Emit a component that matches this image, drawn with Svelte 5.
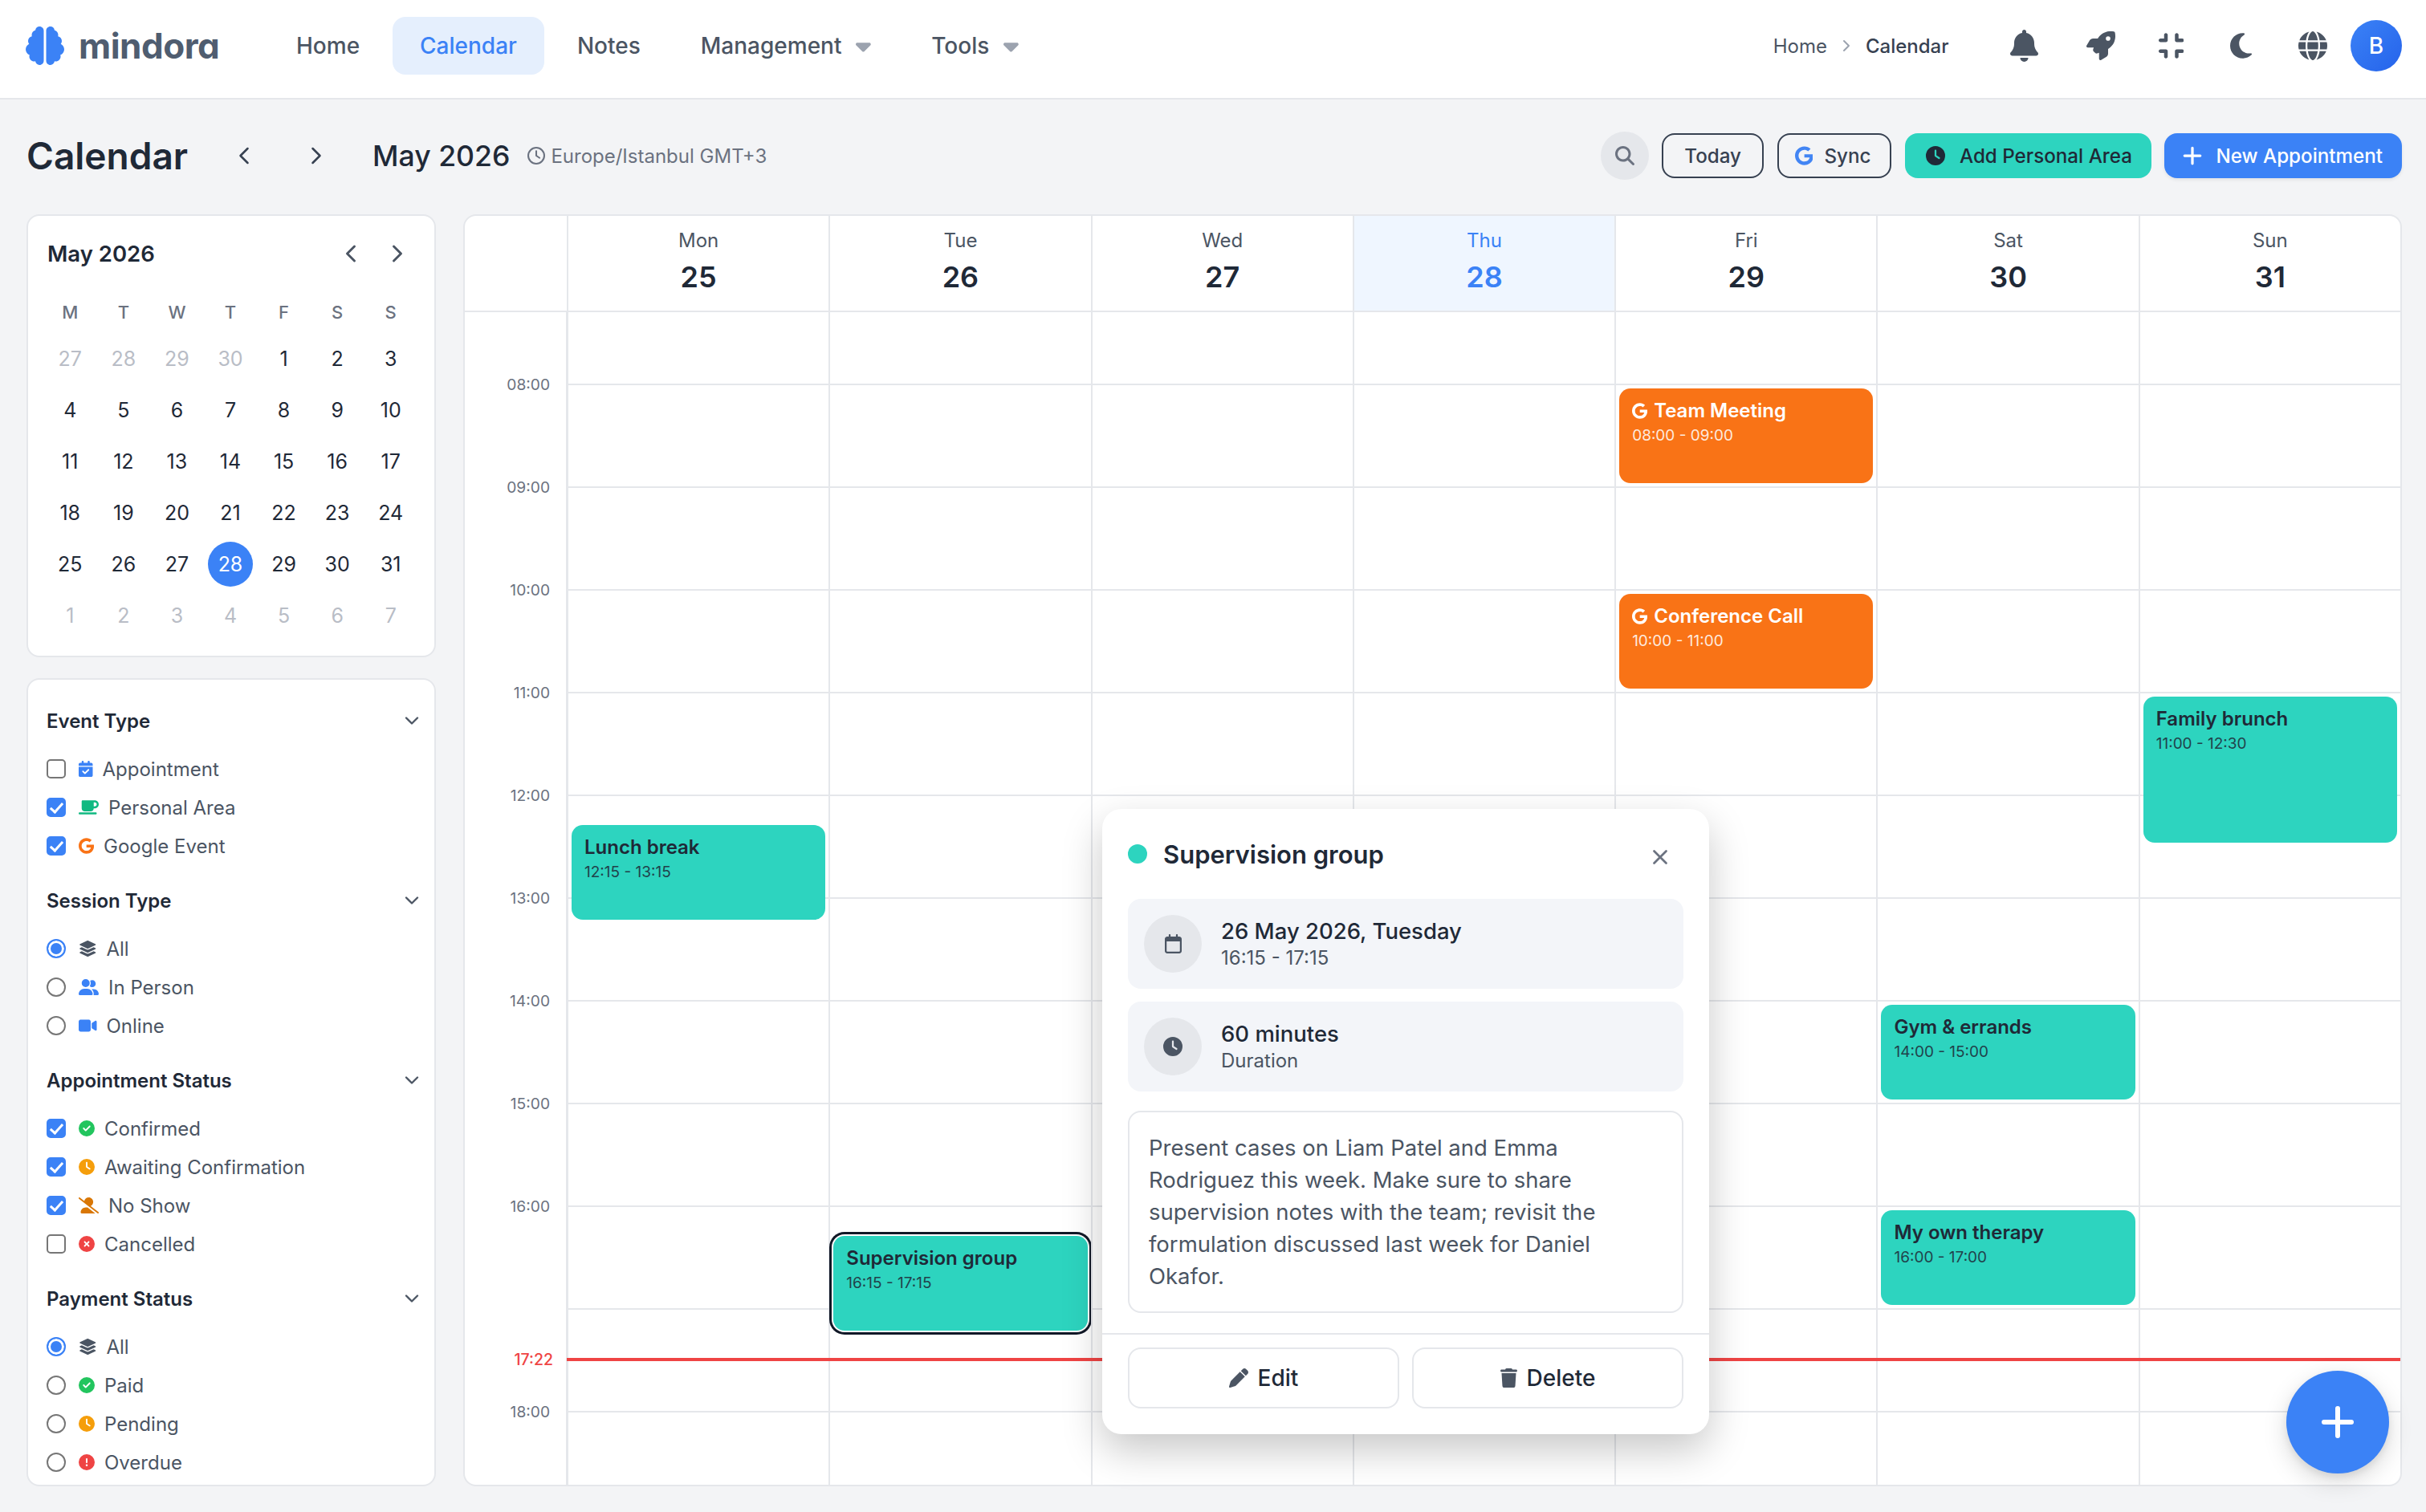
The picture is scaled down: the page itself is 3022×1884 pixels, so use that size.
<script>
  const icons = {
    brain: [512, 'M184 0c30.9 0 56 25.1 56 56V456c0 30.9-25.1 56-56 56c-28.9 0-52.7-21.9-55.7-50.1c-5.2 1.4-10.7 2.1-16.3 2.1c-35.3 0-64-28.7-64-64c0-7.4 1.3-14.6 3.6-21.2C21.4 367.4 0 338.2 0 304c0-31.9 18.7-59.5 45.8-72.3C37.1 220.8 32 207 32 192c0-30.7 21.6-56.3 50.4-62.6C80.8 123.9 80 118 80 112c0-29.9 20.6-55.1 48.3-62.1C131.3 21.9 155.1 0 184 0zM328 0c28.9 0 52.6 21.9 55.7 49.9c27.8 7 48.3 32.1 48.3 62.1c0 6-.8 11.9-2.4 17.4c28.8 6.2 50.4 31.9 50.4 62.6c0 15-5.1 28.8-13.8 39.7C493.3 244.5 512 272.1 512 304c0 34.2-21.4 63.4-51.6 74.8c2.3 6.6 3.6 13.8 3.6 21.2c0 35.3-28.7 64-64 64c-5.6 0-11.1-.7-16.3-2.1c-3 28.2-26.8 50.1-55.7 50.1c-30.9 0-56-25.1-56-56V56c0-30.9 25.1-56 56-56z'],
    bell: [448, 'M224 0c-17.7 0-32 14.3-32 32V51.2C119 66 64 130.6 64 208v18.8c0 47-17.3 92.4-48.5 127.6l-7.4 8.3c-8.4 9.4-10.4 22.9-5.3 34.4S19.4 416 32 416H416c12.6 0 24-7.4 29.2-18.9s3.1-25-5.3-34.4l-7.4-8.3C401.3 319.2 384 273.9 384 226.8V208c0-77.4-55-142-128-156.8V32c0-17.7-14.3-32-32-32zm45.3 493.3c12-12 18.7-28.3 18.7-45.3H224 160c0 17 6.7 33.3 18.7 45.3s28.3 18.7 45.3 18.7s33.3-6.7 45.3-18.7z'],
    rocket: [512, 'M156.6 384.9L125.7 354c-8.5-8.5-11.5-20.8-7.7-32.2c3-8.9 7-20.5 11.8-33.8L24 288c-8.6 0-16.6-4.6-20.9-12.1s-4.2-16.7 .2-24.1l52.5-88.5c13-21.9 36.5-35.3 61.9-35.3l82.3 0c2.4-4 4.8-7.7 7.2-11.3C289.1-4.1 411.1-8.1 483.9 5.3c11.6 2.1 20.6 11.2 22.8 22.8c13.4 72.9 9.3 194.8-111.4 276.7c-3.5 2.4-7.3 4.8-11.3 7.2v82.3c0 25.4-13.4 49-35.3 61.9l-88.5 52.5c-7.4 4.4-16.6 4.5-24.1 .2s-12.1-12.2-12.1-20.9V380.8c-14.1 4.9-26.4 8.9-35.7 11.9c-11.2 3.6-23.4 .5-31.8-7.8zM384 168a40 40 0 1 0 0-80 40 40 0 1 0 0 80z'],
    compress: [448, 'M160 64c0-17.7-14.3-32-32-32s-32 14.3-32 32v64H32c-17.7 0-32 14.3-32 32s14.3 32 32 32h96c17.7 0 32-14.3 32-32V64zM32 320c-17.7 0-32 14.3-32 32s14.3 32 32 32H96v64c0 17.7 14.3 32 32 32s32-14.3 32-32V352c0-17.7-14.3-32-32-32H32zM352 64c0-17.7-14.3-32-32-32s-32 14.3-32 32v96c0 17.7 14.3 32 32 32h96c17.7 0 32-14.3 32-32s-14.3-32-32-32H352V64zM320 320c-17.7 0-32 14.3-32 32v96c0 17.7 14.3 32 32 32s32-14.3 32-32V384h64c17.7 0 32-14.3 32-32s-14.3-32-32-32H320z'],
    moon: [384, 'M223.5 32C100 32 0 132.3 0 256S100 480 223.5 480c60.6 0 115.5-24.2 155.8-63.4c5-4.9 6.3-12.5 3.1-18.7s-10.1-9.7-17-8.5c-9.8 1.7-19.8 2.6-30.1 2.6c-96.9 0-175.5-78.8-175.5-176c0-65.8 36-123.1 89.3-153.3c6.1-3.5 9.2-10.5 7.7-17.3s-7.3-11.9-14.3-12.5c-6.3-.5-12.6-.8-19-.8z'],
    globe: [512, 'M352 256c0 22.2-1.2 43.6-3.3 64H163.3c-2.2-20.4-3.3-41.8-3.3-64s1.2-43.6 3.3-64H348.7c2.2 20.4 3.3 41.8 3.3 64zm28.8-64H503.9c5.3 20.5 8.1 41.9 8.1 64s-2.8 43.5-8.1 64H380.8c2.1-20.6 3.2-42 3.2-64s-1.1-43.4-3.2-64zm112.6-32H376.7c-10-63.9-29.8-117.4-55.3-151.6c78.3 20.7 142 77.5 171.9 151.6zm-149.1 0H167.7c6.1-36.4 15.5-68.6 27-94.7c10.5-23.6 22.2-40.7 33.5-51.5C239.4 3.2 248.7 0 256 0s16.6 3.2 27.8 13.8c11.3 10.8 23 27.9 33.5 51.5c11.6 26 20.9 58.2 27 94.7zm-209 0H18.6C48.6 85.9 112.2 29.1 190.6 8.4C165.1 42.6 145.3 96.1 135.3 160zM8.1 192H131.2c-2.1 20.6-3.2 42-3.2 64s1.1 43.4 3.2 64H8.1C2.8 299.5 0 278.1 0 256s2.8-43.5 8.1-64zM194.7 446.6c-11.6-26-20.9-58.2-27-94.6H344.3c-6.1 36.4-15.5 68.6-27 94.6c-10.5 23.6-22.2 40.7-33.5 51.5C272.6 508.8 263.3 512 256 512s-16.6-3.2-27.8-13.8c-11.3-10.8-23-27.9-33.5-51.5zM135.3 352c10 63.9 29.8 117.4 55.3 151.6C112.2 482.9 48.6 426.1 18.6 352H135.3zm358.1 0c-30 74.1-93.6 130.9-171.9 151.6c25.5-34.2 45.2-87.7 55.3-151.6H493.4z'],
    clock: [512, 'M256 0a256 256 0 1 1 0 512A256 256 0 1 1 256 0zM232 120V256c0 8 4 15.5 10.7 20l96 64c11 7.4 25.9 4.4 33.3-6.7s4.4-25.9-6.7-33.3L280 243.2V120c0-13.3-10.7-24-24-24s-24 10.7-24 24z'],
    clockOutline: [512, 'M464 256A208 208 0 1 1 48 256a208 208 0 1 1 416 0zM0 256a256 256 0 1 0 512 0A256 256 0 1 0 0 256zM232 120V256c0 8 4 15.5 10.7 20l96 64c11 7.4 25.9 4.4 33.3-6.7s4.4-25.9-6.7-33.3L280 243.2V120c0-13.3-10.7-24-24-24s-24 10.7-24 24z'],
    google: [488, 'M488 261.8C488 403.3 391.1 504 248 504 110.8 504 0 393.2 0 256S110.8 8 248 8c66.8 0 123 24.5 166.3 64.9l-67.5 64.9C258.5 52.6 94.3 116.6 94.3 256c0 86.5 69.1 156.6 153.7 156.6 98.2 0 135-70.4 140.8-106.9H248v-85.3h236.1c2.3 12.7 3.9 24.9 3.9 41.4z'],
    calendarCheck: [448, 'M128 0c17.7 0 32 14.3 32 32V64H288V32c0-17.7 14.3-32 32-32s32 14.3 32 32V64h48c26.5 0 48 21.5 48 48v48H0V112C0 85.5 21.5 64 48 64H96V32c0-17.7 14.3-32 32-32zM0 192H448V464c0 26.5-21.5 48-48 48H48c-26.5 0-48-21.5-48-48V192zM329 305c9.4-9.4 9.4-24.6 0-33.9s-24.6-9.4-33.9 0l-95 95-47-47c-9.4-9.4-24.6-9.4-33.9 0s-9.4 24.6 0 33.9l64 64c9.4 9.4 24.6 9.4 33.9 0L329 305z'],
    calendar: [448, 'M152 24c0-13.3-10.7-24-24-24s-24 10.7-24 24V64H64C28.7 64 0 92.7 0 128v16 48V448c0 35.3 28.7 64 64 64H384c35.3 0 64-28.7 64-64V192 144 128c0-35.3-28.7-64-64-64H344V24c0-13.3-10.7-24-24-24s-24 10.7-24 24V64H152V24zM48 192H400V448c0 8.8-7.2 16-16 16H64c-8.8 0-16-7.2-16-16V192z'],
    mug: [640, 'M96 64c0-17.7 14.3-32 32-32H448h64c70.7 0 128 57.3 128 128s-57.3 128-128 128H480c0 53-43 96-96 96H192c-53 0-96-43-96-96V64zM480 224h32c35.3 0 64-28.7 64-64s-28.7-64-64-64H480V224zM32 416H544c17.7 0 32 14.3 32 32s-14.3 32-32 32H32c-17.7 0-32-14.3-32-32s14.3-32 32-32z'],
    layers: [576, 'M264.5 5.2c14.9-6.9 32.1-6.9 47 0l218.6 101c8.5 3.9 13.9 12.4 13.9 21.8s-5.4 17.9-13.9 21.8l-218.6 101c-14.9 6.9-32.1 6.9-47 0L45.9 149.8C37.4 145.8 32 137.3 32 128s5.4-17.9 13.9-21.8L264.5 5.2zM476.9 209.6l53.2 24.6c8.5 3.9 13.9 12.4 13.9 21.8s-5.4 17.9-13.9 21.8l-218.6 101c-14.9 6.9-32.1 6.9-47 0L45.9 277.8C37.4 273.8 32 265.3 32 256s5.4-17.9 13.9-21.8l53.2-24.6 152 70.2c23.4 10.8 50.4 10.8 73.8 0l152-70.2zm-152 198.2l152-70.2 53.2 24.6c8.5 3.9 13.9 12.4 13.9 21.8s-5.4 17.9-13.9 21.8l-218.6 101c-14.9 6.9-32.1 6.9-47 0L45.9 405.8C37.4 401.8 32 393.3 32 384s5.4-17.9 13.9-21.8l53.2-24.6 152 70.2c23.4 10.8 50.4 10.8 73.8 0z'],
    users: [640, 'M96 128a128 128 0 1 1 256 0A128 128 0 1 1 96 128zM0 482.3C0 383.8 79.8 304 178.3 304h91.4C368.2 304 448 383.8 448 482.3c0 16.4-13.3 29.7-29.7 29.7H29.7C13.3 512 0 498.7 0 482.3zM609.3 512H471.4c5.4-9.4 8.6-20.3 8.6-32v-8c0-60.7-27.1-115.2-69.8-151.8c2.4-.1 4.7-.2 7.1-.2h61.4C567.8 320 640 392.2 640 481.3c0 17-13.8 30.7-30.7 30.7zM432 256c-31 0-59-12.6-79.3-32.9C372.4 196.5 384 163.6 384 128c0-26.8-6.6-52.1-18.3-74.3C384.3 40.1 407.2 32 432 32c61.9 0 112 50.1 112 112s-50.1 112-112 112z'],
    video: [576, 'M0 128C0 92.7 28.7 64 64 64H320c35.3 0 64 28.7 64 64V384c0 35.3-28.7 64-64 64H64c-35.3 0-64-28.7-64-64V128zM559.1 99.8c10.4 5.6 16.9 16.4 16.9 28.2V384c0 11.8-6.5 22.6-16.9 28.2s-23 5-32.9-1.6l-96-64L416 337.1V320 192 174.9l14.2-9.5 96-64c9.8-6.5 22.4-7.2 32.9-1.6z'],
    check: [512, 'M256 512A256 256 0 1 0 256 0a256 256 0 1 0 0 512zM369 209L241 337c-9.4 9.4-24.6 9.4-33.9 0l-64-64c-9.4-9.4-9.4-24.6 0-33.9s24.6-9.4 33.9 0l47 47L335 175c9.4-9.4 24.6-9.4 33.9 0s9.4 24.6 0 33.9z'],
    xmark: [512, 'M256 512A256 256 0 1 0 256 0a256 256 0 1 0 0 512zM175 175c9.4-9.4 24.6-9.4 33.9 0l47 47 47-47c9.4-9.4 24.6-9.4 33.9 0s9.4 24.6 0 33.9l-47 47 47 47c9.4 9.4 9.4 24.6 0 33.9s-24.6 9.4-33.9 0l-47-47-47 47c-9.4 9.4-24.6 9.4-33.9 0s-9.4-24.6 0-33.9l47-47-47-47c-9.4-9.4-9.4-24.6 0-33.9z'],
    alert: [512, 'M256 512A256 256 0 1 0 256 0a256 256 0 1 0 0 512zm0-384c13.3 0 24 10.7 24 24V264c0 13.3-10.7 24-24 24s-24-10.7-24-24V152c0-13.3 10.7-24 24-24zM224 352a32 32 0 1 1 64 0 32 32 0 1 1 -64 0z'],
    userSlash: [640, 'M38.8 5.1C28.4-3.1 13.3-1.2 5.1 9.2S-1.2 34.7 9.2 42.9l592 464c10.4 8.2 25.5 6.3 33.7-4.1s6.3-25.5-4.1-33.7L381.9 274c48.5-23.2 82.1-72.7 82.1-130C464 64.5 399.5 0 320 0C250.4 0 192.4 49.3 178.9 114.9L38.8 5.1zM545.5 512H528L284.3 320h-59C136.2 320 64 392.2 64 481.3c0 17 13.8 30.7 30.7 30.7H545.3l.3 0z'],
    pen: [512, 'M362.7 19.3L314.3 67.7 444.3 197.7l48.4-48.4c25-25 25-65.5 0-90.5L453.3 19.3c-25-25-65.5-25-90.5 0zm-71 71L58.6 323.5c-10.4 10.4-18 23.3-22.2 37.4L1 481.2C-1.5 489.7 .8 498.8 7 505s15.3 8.5 23.7 6.1l120.3-35.4c14.1-4.2 27-11.8 37.4-22.2L421.7 220.3 291.7 90.3z'],
    trash: [448, 'M135.2 17.7L128 32H32C14.3 32 0 46.3 0 64S14.3 96 32 96H416c17.7 0 32-14.3 32-32s-14.3-32-32-32H320l-7.2-14.3C307.4 6.8 296.3 0 284.2 0H163.8c-12.1 0-23.2 6.8-28.6 17.7zM416 128H32L53.2 467c1.6 25.3 22.6 45 47.9 45H346.9c25.3 0 46.3-19.7 47.9-45L416 128z'],
    search: [512, 'M416 208c0 45.9-14.9 88.3-40 122.7L502.6 457.4c12.5 12.5 12.5 32.8 0 45.3s-32.8 12.5-45.3 0L330.7 376c-34.4 25.2-76.8 40-122.7 40C93.1 416 0 322.9 0 208S93.1 0 208 0S416 93.1 416 208zM208 352a144 144 0 1 0 0-288 144 144 0 1 0 0 288z'],
    caret: [320, 'M137.4 374.6c12.5 12.5 32.8 12.5 45.3 0l128-128c9.2-9.2 11.9-22.9 6.9-34.9s-16.6-19.8-29.6-19.8L32 192c-12.9 0-24.6 7.8-29.6 19.8s-2.2 25.7 6.9 34.9l128 128z']
  }

  const navItems = [
    { label: 'Home' },
    { label: 'Calendar', active: true },
    { label: 'Notes' },
    { label: 'Management', caret: true },
    { label: 'Tools', caret: true }
  ]

  const weekLetters = ['M', 'T', 'W', 'T', 'F', 'S', 'S']
  const miniDays = [
    ...[27, 28, 29, 30].map((d) => ({ d, muted: true })),
    ...Array.from({ length: 31 }, (_, i) => ({ d: i + 1, today: i + 1 === 28 })),
    ...[1, 2, 3, 4, 5, 6, 7].map((d) => ({ d, muted: true }))
  ]

  const blue = '#3b82f6'
  const green = '#22c55e'
  const amber = '#f59e0b'
  const red = '#ef4444'
  const slate = '#4b5563'

  const filters = [
    {
      title: 'Event Type', type: 'checkbox', name: 'event', items: [
        { label: 'Appointment', icon: 'calendarCheck', color: blue },
        { label: 'Personal Area', icon: 'mug', color: '#10b981', on: true },
        { label: 'Google Event', icon: 'google', color: '#f97316', on: true }
      ]
    },
    {
      title: 'Session Type', type: 'radio', name: 'session', items: [
        { label: 'All', icon: 'layers', color: slate, on: true },
        { label: 'In Person', icon: 'users', color: blue },
        { label: 'Online', icon: 'video', color: blue }
      ]
    },
    {
      title: 'Appointment Status', type: 'checkbox', name: 'status', items: [
        { label: 'Confirmed', icon: 'check', color: green, on: true },
        { label: 'Awaiting Confirmation', icon: 'clock', color: amber, on: true },
        { label: 'No Show', icon: 'userSlash', color: '#d97706', on: true },
        { label: 'Cancelled', icon: 'xmark', color: red }
      ]
    },
    {
      title: 'Payment Status', type: 'radio', name: 'payment', items: [
        { label: 'All', icon: 'layers', color: slate, on: true },
        { label: 'Paid', icon: 'check', color: green },
        { label: 'Pending', icon: 'clock', color: amber },
        { label: 'Overdue', icon: 'alert', color: red }
      ]
    }
  ]

  const HOUR = 128
  const FIRST_SLOT = 91

  const eventStyle = (start, end) =>
    `top:${FIRST_SLOT + (start - 8) * HOUR + 4}px;height:${(end - start) * HOUR - 10}px`

  const days = [
    { name: 'Mon', date: 25, events: [{ title: 'Lunch break', time: '12:15 - 13:15', start: 12.25, end: 13.25 }] },
    { name: 'Tue', date: 26, events: [{ title: 'Supervision group', time: '16:15 - 17:15', start: 16.25, end: 17.25, selected: true }] },
    { name: 'Wed', date: 27, events: [] },
    { name: 'Thu', date: 28, today: true, events: [] },
    {
      name: 'Fri', date: 29, events: [
        { title: 'Team Meeting', time: '08:00 - 09:00', start: 8, end: 9, google: true },
        { title: 'Conference Call', time: '10:00 - 11:00', start: 10, end: 11, google: true }
      ]
    },
    {
      name: 'Sat', date: 30, events: [
        { title: 'Gym & errands', time: '14:00 - 15:00', start: 14, end: 15 },
        { title: 'My own therapy', time: '16:00 - 17:00', start: 16, end: 17 }
      ]
    },
    { name: 'Sun', date: 31, events: [{ title: 'Family brunch', time: '11:00 - 12:30', start: 11, end: 12.5 }] }
  ]

  const hours = ['08:00', '09:00', '10:00', '11:00', '12:00', '13:00', '14:00', '15:00', '16:00', '', '18:00', '']
</script>

{#snippet icon(name, cls = '', color = undefined)}
  <svg class="icon {cls}" viewBox="0 0 {icons[name][0]} 512" fill="currentColor" style={color ? `color:${color}` : undefined} aria-hidden="true">
    <path d={icons[name][1]} />
  </svg>
{/snippet}

{#snippet chevron(dir, cls = '')}
  <svg class="chevron {cls}" viewBox="0 0 24 24" fill="none" stroke="currentColor" stroke-width="2" stroke-linecap="round" stroke-linejoin="round" aria-hidden="true">
    {#if dir === 'left'}<path d="m15 18-6-6 6-6" />{/if}
    {#if dir === 'right'}<path d="m9 18 6-6-6-6" />{/if}
    {#if dir === 'down'}<path d="m6 9 6 6 6-6" />{/if}
  </svg>
{/snippet}

<div class="app">
  <header class="topbar">
    <div class="logo">
      {@render icon('brain', 'logo-mark')}
      <span class="logo-text">mindora</span>
    </div>
    <nav class="nav">
      {#each navItems as item}
        <button class="nav-item" class:active={item.active}>
          {item.label}
          {#if item.caret}{@render icon('caret', 'caret')}{/if}
        </button>
      {/each}
    </nav>
    <div class="breadcrumb">
      <span>Home</span>
      {@render chevron('right', 'crumb-sep')}
      <span class="crumb-current">Calendar</span>
    </div>
    <div class="top-icons">
      <button class="top-icon">{@render icon('bell', 'ico-bell')}</button>
      <button class="top-icon">{@render icon('rocket', 'ico-top')}</button>
      <button class="top-icon">{@render icon('compress', 'ico-top')}</button>
      <button class="top-icon">{@render icon('moon', 'ico-top')}</button>
      <button class="top-icon">{@render icon('globe', 'ico-top')}</button>
    </div>
    <div class="avatar">B</div>
  </header>

  <main class="page">
    <div class="toolbar">
      <h1>Calendar</h1>
      <div class="week-nav">
        <button class="week-btn">{@render chevron('left', 'chev-lg')}</button>
        <button class="week-btn">{@render chevron('right', 'chev-lg')}</button>
      </div>
      <span class="range">May 2026</span>
      <span class="tz">{@render icon('clockOutline', 'ico-tz')} Europe/Istanbul GMT+3</span>
      <div class="actions">
        <button class="search">{@render icon('search', 'ico-24')}</button>
        <button class="btn outline">Today</button>
        <button class="btn outline sync">{@render icon('google', 'ico-24', '#4285f4')} Sync</button>
        <button class="btn teal">{@render icon('clock', 'ico-24')} Add Personal Area</button>
        <button class="btn primary">
          <svg class="plus" viewBox="0 0 24 24" fill="none" stroke="currentColor" stroke-width="3" stroke-linecap="round"><path d="M12 3v18M3 12h18" /></svg>
          New Appointment
        </button>
      </div>
    </div>

    <div class="content">
      <aside class="side">
        <section class="card mini">
          <div class="mini-head">
            <span class="mini-title">May 2026</span>
            <div class="mini-arrows">
              <button>{@render chevron('left', 'chev-mini')}</button>
              <button>{@render chevron('right', 'chev-mini')}</button>
            </div>
          </div>
          <div class="mini-grid">
            {#each weekLetters as l}<span class="mini-week">{l}</span>{/each}
            {#each miniDays as day}
              <span class="mini-day" class:muted={day.muted}>
                <span class:today={day.today}>{day.d}</span>
              </span>
            {/each}
          </div>
        </section>

        <section class="card filters">
          {#each filters as group}
            <div class="filter-group">
              <div class="filter-head">
                <span>{group.title}</span>
                {@render chevron('down', 'chev-down')}
              </div>
              {#each group.items as item}
                <label class="filter-row">
                  <input type={group.type} name={group.name} checked={item.on} />
                  {@render icon(item.icon, 'ico-filter', item.color)}
                  <span>{item.label}</span>
                </label>
              {/each}
            </div>
          {/each}
        </section>
      </aside>

      <section class="card calendar">
        <div class="cal-head">
          <div class="corner"></div>
          {#each days as day}
            <div class="day-head" class:is-today={day.today}>
              <span class="day-name">{day.name}</span>
              <span class="day-date">{day.date}</span>
            </div>
          {/each}
        </div>
        <div class="cal-body">
          <div class="time-col">
            {#each hours as h}
              <div class="time-slot"><span>{h}</span></div>
            {/each}
          </div>
          {#each days as day}
            <div class="day-col">
              {#each hours as _}<div class="slot"></div>{/each}
              {#each day.events as ev}
                <div class="event" class:orange={ev.google} class:selected={ev.selected} style={eventStyle(ev.start, ev.end)}>
                  <div class="event-title">
                    {#if ev.google}{@render icon('google', 'ico-g')}{/if}
                    {ev.title}
                  </div>
                  <div class="event-time">{ev.time}</div>
                </div>
              {/each}
            </div>
          {/each}
          <span class="now-label">17:22</span>
          <div class="now-line"></div>
        </div>
      </section>
    </div>
  </main>

  <div class="popup">
    <div class="popup-body">
      <div class="popup-head">
        <span class="dot"></span>
        <h2>Supervision group</h2>
        <button class="close" aria-label="Close">
          <svg viewBox="0 0 24 24" fill="none" stroke="currentColor" stroke-width="2.2" stroke-linecap="round"><path d="M6 6l12 12M18 6 6 18" /></svg>
        </button>
      </div>
      <div class="info">
        <span class="info-ico">{@render icon('calendar', 'ico-24')}</span>
        <div>
          <div class="info-main">26 May 2026, Tuesday</div>
          <div class="info-sub">16:15 - 17:15</div>
        </div>
      </div>
      <div class="info">
        <span class="info-ico">{@render icon('clock', 'ico-24')}</span>
        <div>
          <div class="info-main">60 minutes</div>
          <div class="info-sub">Duration</div>
        </div>
      </div>
      <p class="notes">Present cases on Liam Patel and Emma Rodriguez this week. Make sure to share supervision notes with the team; revisit the formulation discussed last week for Daniel Okafor.</p>
    </div>
    <div class="popup-foot">
      <button class="foot-btn">{@render icon('pen', 'ico-24')} Edit</button>
      <button class="foot-btn">{@render icon('trash', 'ico-24')} Delete</button>
    </div>
  </div>

  <button class="fab" aria-label="Add">
    <svg viewBox="0 0 48 48" fill="none" stroke="currentColor" stroke-width="6" stroke-linecap="round"><path d="M24 7v34M7 24h34" /></svg>
  </button>
</div>

<style>
  :global(body) {
    margin: 0;
    background: #f3f4f6;
    font-family: Inter, "Liberation Sans", sans-serif;
    color: #1f2937;
  }

  button {
    font: inherit;
    color: inherit;
    background: none;
    border: 0;
    padding: 0;
    cursor: pointer;
  }

  .app {
    position: relative;
    height: 1884px;
    overflow: hidden;
  }

  .icon {
    display: block;
    flex: none;
  }

  .chevron {
    display: block;
    flex: none;
  }

  /* top bar */
  .topbar {
    box-sizing: border-box;
    height: 124px;
    display: flex;
    align-items: center;
    padding: 0 30px 8px 32px;
    background: #fff;
    border-bottom: 2px solid #e5e7eb;
  }

  .logo {
    width: 303px;
    display: flex;
    align-items: center;
    gap: 18px;
  }

  .logo-mark {
    height: 48px;
    color: #3b82f6;
  }

  .logo-text {
    font-size: 44px;
    font-weight: 700;
    line-height: 48px;
    color: #4f5d70;
    font-feature-settings: "cv11";
    letter-spacing: -0.5px;
  }

  .nav {
    display: flex;
    gap: 7px;
  }

  .nav-item {
    height: 72px;
    padding: 0 34px;
    border-radius: 16px;
    display: flex;
    align-items: center;
    gap: 18px;
    font-size: 28px;
    font-weight: 500;
    color: #4b5563;
  }

  .nav-item.active {
    background: #e5effd;
    color: #3b82f6;
  }

  .caret {
    height: 30px;
    color: #9ca3af;
  }

  .breadcrumb {
    margin-left: auto;
    display: flex;
    align-items: center;
    gap: 12px;
    font-size: 24px;
    color: #4b5563;
  }

  .crumb-current {
    font-weight: 500;
    color: #374151;
  }

  .crumb-sep {
    width: 24px;
    height: 24px;
    color: #9ca3af;
  }

  .top-icons {
    margin-left: 45px;
    display: flex;
    align-items: center;
  }

  .top-icon {
    padding: 0 29px;
    color: #4b5563;
  }

  .top-icon:nth-child(1) {
    padding: 0 27px 0 31px;
  }

  .top-icon:nth-child(2) {
    padding: 0 25px 0 33px;
  }

  .ico-bell {
    height: 40px;
  }

  .ico-top {
    height: 36px;
  }

  .avatar {
    width: 64px;
    height: 64px;
    border-radius: 50%;
    background: linear-gradient(135deg, #3b82f6, #2563eb);
    color: #fff;
    font-size: 28px;
    font-weight: 500;
    display: flex;
    align-items: center;
    justify-content: center;
  }

  /* page */
  .page {
    padding: 40px 30px 0 33px;
  }

  .toolbar {
    height: 60px;
    display: flex;
    align-items: center;
    margin-bottom: 43px;
  }

  h1 {
    margin: 0;
    font-size: 46px;
    font-weight: 600;
    color: #1f2937;
  }

  .week-nav {
    display: flex;
    gap: 34px;
    margin: 0 42px 0 42px;
  }

  .week-btn {
    width: 56px;
    height: 56px;
    display: flex;
    align-items: center;
    justify-content: center;
    color: #374151;
  }

  .chev-lg {
    width: 36px;
    height: 36px;
    stroke-width: 1.7;
  }

  .range {
    font-size: 35.6px;
    font-weight: 500;
    color: #1f2937;
  }

  .tz {
    margin-left: 22px;
    display: flex;
    align-items: center;
    gap: 7px;
    font-size: 24px;
    color: #6b7280;
  }

  .ico-tz {
    height: 22px;
  }

  .actions {
    margin-left: auto;
    display: flex;
    align-items: center;
    gap: 16.5px;
  }

  .search {
    width: 60px;
    height: 60px;
    border-radius: 50%;
    background: #e5e7eb;
    color: #6b7280;
    display: flex;
    align-items: center;
    justify-content: center;
  }

  .ico-24 {
    height: 24px;
  }

  .btn {
    box-sizing: border-box;
    height: 56px;
    padding: 0 24px;
    border-radius: 16px;
    display: flex;
    align-items: center;
    font-size: 24.2px;
    font-weight: 500;
    gap: 18px;
  }

  .outline {
    border: 2px solid #374151;
    color: #374151;
    padding: 0 26px;
  }

  .sync {
    padding: 0 24px 0 20px;
    gap: 14px;
  }

  .teal {
    background: #2dd4bf;
    color: #1f2937;
    padding-left: 26px;
  }

  .primary {
    background: #3b82f6;
    color: #fff;
    padding-left: 22px;
    gap: 16px;
    box-shadow: 0 2px 4px rgba(0, 0, 0, 0.08);
  }

  .plus {
    width: 26px;
    height: 26px;
  }

  .content {
    display: flex;
    gap: 34px;
    height: 1585px;
  }

  .card {
    box-sizing: border-box;
    background: #fff;
    border: 2px solid #e5e7eb;
    border-radius: 16px;
  }

  .side {
    width: 510px;
    flex: none;
    display: flex;
    flex-direction: column;
    gap: 26px;
  }

  /* mini calendar */
  .mini {
    height: 552px;
    padding: 26px 21px 0 19px;
  }

  .mini-head {
    display: flex;
    align-items: center;
    justify-content: space-between;
    padding: 0 0 0 5px;
    height: 42px;
    margin-bottom: 26px;
  }

  .mini-title {
    font-size: 27.5px;
    font-weight: 600;
    color: #1f2937;
  }

  .mini-arrows {
    display: flex;
    gap: 22px;
    color: #4b5563;
    margin-right: 7px;
  }

  .chev-mini {
    width: 36px;
    height: 36px;
  }

  .mini-grid {
    display: grid;
    grid-template-columns: repeat(7, 1fr);
    grid-template-rows: 52px repeat(6, 64px);
  }

  .mini-week {
    display: flex;
    align-items: center;
    justify-content: center;
    font-size: 22px;
    font-weight: 500;
    color: #6b7280;
  }

  .mini-day {
    display: flex;
    align-items: center;
    justify-content: center;
    font-size: 25px;
    color: #1f2937;
  }

  .mini-day.muted {
    color: #b9bdc6;
  }

  .today {
    width: 56px;
    height: 56px;
    border-radius: 50%;
    background: #3b82f6;
    color: #fff;
    display: flex;
    align-items: center;
    justify-content: center;
  }

  /* filters */
  .filters {
    flex: 1;
    min-height: 0;
    overflow: hidden;
    padding: 35px 24px 0 23px;
  }

  .filter-group {
    margin-bottom: 28px;
  }

  .filter-head {
    height: 32px;
    margin-bottom: 20px;
    display: flex;
    align-items: center;
    justify-content: space-between;
    font-size: 24px;
    font-weight: 600;
    color: #1f2937;
  }

  .chev-down {
    width: 28px;
    height: 28px;
    margin-right: -10px;
    color: #4b5563;
  }

  .filter-row {
    height: 48px;
    display: flex;
    align-items: center;
    font-size: 24px;
    color: #4b5563;
  }

  .ico-filter {
    height: 20px;
    margin: 0 12px 0 16px;
  }

  input {
    appearance: none;
    box-sizing: border-box;
    width: 24px;
    height: 24px;
    margin: 0;
    flex: none;
    border: 2px solid #767676;
    background: #fff;
    position: relative;
  }

  input[type='checkbox'] {
    border-radius: 5px;
  }

  input[type='checkbox']:checked {
    background: #3b82f6;
    border-color: #3b82f6;
  }

  input[type='checkbox']:checked::after {
    content: '';
    position: absolute;
    left: 5.5px;
    top: 1px;
    width: 6px;
    height: 13px;
    border: solid #fff;
    border-width: 0 3.5px 3.5px 0;
    transform: rotate(42deg);
  }

  input[type='radio'] {
    border-radius: 50%;
  }

  input[type='radio']:checked {
    border-color: #3b82f6;
    background: #3b82f6;
    box-shadow: inset 0 0 0 3px #fff;
  }

  /* week grid */
  .calendar {
    flex: 1;
    min-width: 0;
    overflow: hidden;
  }

  .cal-head,
  .cal-body {
    display: grid;
    grid-template-columns: 127px repeat(7, 1fr);
  }

  .cal-head {
    height: 120px;
    box-sizing: border-box;
    border-bottom: 2px solid #e5e7eb;
  }

  .day-head {
    border-left: 2px solid #e5e7eb;
    display: flex;
    flex-direction: column;
    align-items: center;
    padding-top: 16px;
  }

  .day-name {
    font-size: 24px;
    line-height: 30px;
    font-weight: 400;
    color: #4b5563;
  }

  .day-date {
    margin-top: 6px;
    font-size: 36px;
    line-height: 48px;
    font-weight: 600;
    color: #1f2937;
  }

  .is-today {
    background: #eff6ff;
  }

  .is-today .day-name,
  .is-today .day-date {
    color: #3b82f6;
  }

  .cal-body {
    position: relative;
    height: 1463px;
    overflow: hidden;
  }

  .time-col {
    border-right: 1px solid #e5e7eb;
  }

  .time-slot {
    box-sizing: border-box;
    height: 128px;
    display: flex;
    align-items: flex-end;
    justify-content: flex-end;
    padding-right: 20px;
    font-size: 19.2px;
    line-height: 28px;
    color: #6b7280;
  }

  .time-slot:first-child {
    height: 91px;
  }

  .time-slot span {
    transform: translateY(13px);
  }

  .day-col {
    position: relative;
    border-left: 2px solid #e5e7eb;
  }

  .slot {
    box-sizing: border-box;
    height: 128px;
    border-bottom: 2px solid #e5e7eb;
  }

  .slot:first-child {
    height: 91px;
  }

  .event {
    position: absolute;
    left: 4px;
    right: 4px;
    box-sizing: border-box;
    padding: 12px 16px;
    border-radius: 14px;
    background: #2dd4bf;
    color: #1f2937;
    overflow: hidden;
  }

  .event.orange {
    background: #f97316;
    color: #fff;
  }

  .event.selected {
    overflow: visible;
    box-shadow: 0 0 0 2px #fff, 0 0 0 5px #111827;
  }

  .event-title {
    display: flex;
    align-items: center;
    gap: 8px;
    font-size: 24px;
    line-height: 32px;
    font-weight: 600;
  }

  .ico-g {
    height: 20px;
  }

  .event-time {
    font-size: 19px;
    line-height: 30px;
    opacity: 0.85;
  }

  .now-line {
    position: absolute;
    left: 127px;
    right: 0;
    top: 1303px;
    height: 4px;
    background: #ef4444;
  }

  .now-label {
    position: absolute;
    top: 1291px;
    left: 0;
    width: 110px;
    text-align: right;
    font-size: 19.5px;
    line-height: 28px;
    font-weight: 500;
    color: #ef4444;
  }

  /* details popup */
  .popup {
    position: absolute;
    left: 1373px;
    top: 1008px;
    width: 756px;
    background: #fff;
    border-radius: 24px;
    box-shadow: 0 20px 50px rgba(0, 0, 0, 0.22);
  }

  .popup-body {
    padding: 36px 32px 25px;
  }

  .popup-head {
    height: 40px;
    display: flex;
    align-items: center;
    gap: 20px;
    margin-bottom: 36px;
  }

  .dot {
    width: 24px;
    height: 24px;
    border-radius: 50%;
    background: #2dd4bf;
  }

  h2 {
    margin: 0;
    font-size: 31px;
    font-weight: 600;
    color: #1f2937;
  }

  .close {
    margin-left: auto;
    width: 30px;
    height: 30px;
    margin-right: 14px;
    margin-top: 8px;
    color: #6b7280;
  }

  .close svg {
    display: block;
  }

  .info {
    box-sizing: border-box;
    height: 112px;
    padding: 0 20px;
    margin-bottom: 16px;
    display: flex;
    align-items: center;
    gap: 24px;
    background: #f3f5f9;
    border-radius: 16px;
  }

  .info-ico {
    width: 72px;
    height: 72px;
    border-radius: 50%;
    background: #e5e7eb;
    color: #4b5563;
    display: flex;
    align-items: center;
    justify-content: center;
  }

  .info-main {
    font-size: 27.5px;
    line-height: 36px;
    font-weight: 500;
    color: #1f2937;
  }

  .info-sub {
    font-size: 24px;
    line-height: 32px;
    color: #4b5563;
  }

  .notes {
    margin: 24px 0 0;
    padding: 24px;
    border: 2px solid #e5e7eb;
    border-radius: 16px;
    font-size: 27.5px;
    line-height: 40px;
    color: #4b5563;
  }

  .popup-foot {
    display: flex;
    gap: 16px;
    padding: 16px 32px 32px;
    border-top: 2px solid #e5e7eb;
  }

  .foot-btn {
    flex: 1;
    height: 76px;
    box-sizing: border-box;
    border: 2px solid #e5e7eb;
    border-radius: 16px;
    display: flex;
    align-items: center;
    justify-content: center;
    gap: 12px;
    font-size: 28px;
    font-weight: 500;
    color: #1f2937;
  }

  .foot-btn .icon {
    color: #4b5563;
  }

  .fab {
    position: absolute;
    left: 2848px;
    top: 1708px;
    width: 128px;
    height: 128px;
    border-radius: 50%;
    background: #3b82f6;
    color: #fff;
    display: flex;
    align-items: center;
    justify-content: center;
    box-shadow: 0 10px 30px rgba(0, 0, 0, 0.15), 0 4px 10px rgba(0, 0, 0, 0.08);
  }

  .fab svg {
    width: 48px;
    height: 48px;
  }
</style>
